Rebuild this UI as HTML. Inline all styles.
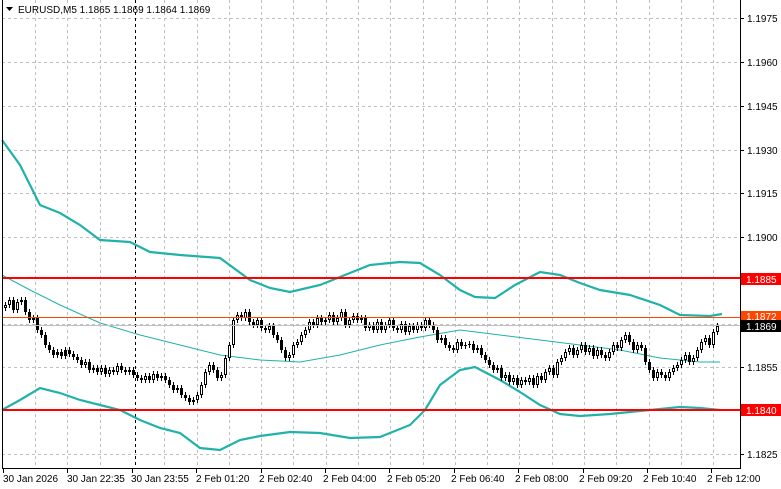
<!DOCTYPE html>
<html><head><meta charset="utf-8"><style>
html,body{margin:0;padding:0;background:#fff;width:781px;height:489px;overflow:hidden}
svg{display:block}
text{font-family:"Liberation Sans",sans-serif;font-size:10px;fill:#000}
</style></head><body>
<svg width="781" height="489" xmlns="http://www.w3.org/2000/svg">
<g stroke="#c0c0c0" stroke-dasharray="3,3" shape-rendering="crispEdges">
<path d="M35.5 0V468M67.5 0V468M100.5 0V468M164.5 0V468M197.5 0V468M229.5 0V468M261.5 0V468M293.5 0V468M326.5 0V468M358.5 0V468M390.5 0V468M423.5 0V468M455.5 0V468M487.5 0V468M519.5 0V468M552.5 0V468M584.5 0V468M616.5 0V468M649.5 0V468M681.5 0V468M713.5 0V468"/>
<path d="M2 18.5H740M2 62.5H740M2 106.5H740M2 150.5H740M2 193.5H740M2 237.5H740M2 324.5H740M2 367.5H740M2 454.5H740"/>
</g>
<path d="M135.5 0V468" stroke="#000" stroke-dasharray="3,3" shape-rendering="crispEdges"/>
<g fill="none" stroke="#20b2aa">
<polyline stroke-width="2.2" points="2,140 20,165 40,205 60,213 80,225 100,240 130,242 150,252 180,255 220,258 250,280 270,288 290,292 320,285 345,275 370,265 400,262 420,263 440,275 460,290 475,297 495,298 515,285 540,272 560,275 580,283 600,290 630,295 660,305 680,315 710,316 722,314"/>
<polyline stroke-width="2.2" points="2,410 20,400 40,388 60,393 80,400 100,405 120,410 140,420 160,428 180,433 200,448 220,450 240,440 260,436 290,432 320,433 350,438 380,437 410,425 425,410 440,385 460,370 475,367 500,380 520,392 540,405 560,414 580,416 610,414 640,411 680,407 700,408 720,410"/>
<polyline stroke-width="1" points="2,275 30,290 60,305 100,323 140,335 180,345 220,355 260,360 300,362 340,355 380,345 420,337 460,330 500,335 540,340 580,345 620,350 660,358 700,362 720,362"/>
</g>
<g shape-rendering="crispEdges">
<path stroke="#000" fill="none" d="M5.5 302V311M9.5 297V308M13.5 297V313M17.5 299V313M21.5 297V305M25.5 297V315M29.5 309V323M33.5 315V323M37.5 315V333M41.5 327V338M45.5 332V348M49.5 342V353M53.5 347V358M57.5 349V358M61.5 349V359M65.5 347V359M69.5 347V357M73.5 351V360M77.5 354V363M81.5 357V368M85.5 359V368M89.5 359V373M93.5 365V373M97.5 365V375M101.5 365V375M105.5 365V377M109.5 367V377M113.5 367V375M117.5 363V375M121.5 363V373M125.5 367V375M129.5 367V375M133.5 367V378M137.5 372V381M141.5 375V383M145.5 373V383M149.5 373V383M153.5 371V383M157.5 371V381M161.5 373V381M165.5 373V383M169.5 377V388M173.5 382V393M177.5 385V393M181.5 385V398M185.5 392V401M189.5 395V405M193.5 397V405M197.5 392V403M201.5 382V398M205.5 369V388M209.5 362V375M213.5 362V373M217.5 367V381M221.5 372V381M225.5 355V378M229.5 342V361M233.5 317V348M237.5 312V323M241.5 312V321M245.5 309V321M249.5 309V325M253.5 319V328M257.5 317V328M261.5 317V331M265.5 325V333M269.5 323V333M273.5 323V338M277.5 332V343M281.5 337V353M285.5 347V361M289.5 352V361M293.5 342V358M297.5 339V348M301.5 332V345M305.5 327V338M309.5 319V333M313.5 319V328M317.5 315V328M321.5 315V325M325.5 317V325M329.5 312V323M333.5 312V325M337.5 315V325M341.5 309V321M345.5 309V328M349.5 317V328M353.5 313V323M357.5 313V323M361.5 315V323M365.5 315V331M369.5 322V331M373.5 322V333M377.5 319V333M381.5 319V333M385.5 322V333M389.5 317V328M393.5 317V331M397.5 325V333M401.5 321V333M405.5 321V335M409.5 323V335M413.5 323V333M417.5 322V333M421.5 322V331M425.5 317V331M429.5 317V328M433.5 322V333M437.5 327V343M441.5 335V343M445.5 335V348M449.5 342V351M453.5 345V353M457.5 339V353M461.5 339V349M465.5 342V349M469.5 341V348M473.5 341V353M477.5 345V353M481.5 345V358M485.5 352V363M489.5 357V368M493.5 362V373M497.5 365V373M501.5 365V381M505.5 372V381M509.5 372V385M513.5 375V385M517.5 375V388M521.5 377V388M525.5 377V385M529.5 375V385M533.5 375V388M537.5 373V388M541.5 373V383M545.5 369V383M549.5 365V375M553.5 365V378M557.5 359V378M561.5 355V365M565.5 349V361M569.5 345V355M573.5 345V358M577.5 347V358M581.5 342V353M585.5 342V355M589.5 345V355M593.5 345V359M597.5 347V359M601.5 347V358M605.5 352V361M609.5 349V361M613.5 342V355M617.5 342V351M621.5 337V351M625.5 332V343M629.5 332V345M633.5 339V353M637.5 342V353M641.5 342V351M645.5 345V365M649.5 359V373M653.5 367V381M657.5 369V381M661.5 369V378M665.5 372V381M669.5 369V381M673.5 365V375M677.5 362V371M681.5 357V368M685.5 352V363M689.5 352V365M693.5 355V365M697.5 347V361M701.5 339V353M705.5 335V345M709.5 335V348M713.5 329V348M717.5 323V335"/>
<path fill="#000" d="M4 305h3V308h-3zM8 300h3V305h-3zM12 300h3V310h-3zM16 302h3V310h-3zM20 300h3V302h-3zM24 300h3V312h-3zM28 312h3V320h-3zM32 318h3V320h-3zM36 318h3V330h-3zM40 330h3V335h-3zM44 335h3V345h-3zM48 345h3V350h-3zM52 350h3V355h-3zM56 352h3V355h-3zM60 352h3V356h-3zM64 350h3V356h-3zM68 350h3V354h-3zM72 354h3V357h-3zM76 357h3V360h-3zM80 360h3V365h-3zM84 362h3V365h-3zM88 362h3V370h-3zM92 368h3V370h-3zM96 368h3V372h-3zM100 368h3V372h-3zM104 368h3V374h-3zM108 370h3V374h-3zM112 370h3V372h-3zM116 366h3V372h-3zM120 366h3V370h-3zM124 370h3V372h-3zM128 370h3V372h-3zM132 370h3V375h-3zM136 375h3V378h-3zM140 378h3V380h-3zM144 376h3V380h-3zM148 376h3V380h-3zM152 374h3V380h-3zM156 374h3V378h-3zM160 376h3V378h-3zM164 376h3V380h-3zM168 380h3V385h-3zM172 385h3V390h-3zM176 388h3V390h-3zM180 388h3V395h-3zM184 395h3V398h-3zM188 398h3V402h-3zM192 400h3V402h-3zM196 395h3V400h-3zM200 385h3V395h-3zM204 372h3V385h-3zM208 365h3V372h-3zM212 365h3V370h-3zM216 370h3V378h-3zM220 375h3V378h-3zM224 358h3V375h-3zM228 345h3V358h-3zM232 320h3V345h-3zM236 315h3V320h-3zM240 315h3V318h-3zM244 312h3V318h-3zM248 312h3V322h-3zM252 322h3V325h-3zM256 320h3V325h-3zM260 320h3V328h-3zM264 328h3V330h-3zM268 326h3V330h-3zM272 326h3V335h-3zM276 335h3V340h-3zM280 340h3V350h-3zM284 350h3V358h-3zM288 355h3V358h-3zM292 345h3V355h-3zM296 342h3V345h-3zM300 335h3V342h-3zM304 330h3V335h-3zM308 322h3V330h-3zM312 322h3V325h-3zM316 318h3V325h-3zM320 318h3V322h-3zM324 320h3V322h-3zM328 315h3V320h-3zM332 315h3V322h-3zM336 318h3V322h-3zM340 312h3V318h-3zM344 312h3V325h-3zM348 320h3V325h-3zM352 316h3V320h-3zM356 316h3V320h-3zM360 318h3V320h-3zM364 318h3V328h-3zM368 325h3V328h-3zM372 325h3V330h-3zM376 322h3V330h-3zM380 322h3V330h-3zM384 325h3V330h-3zM388 320h3V325h-3zM392 320h3V328h-3zM396 328h3V330h-3zM400 324h3V330h-3zM404 324h3V332h-3zM408 326h3V332h-3zM412 326h3V330h-3zM416 325h3V330h-3zM420 325h3V328h-3zM424 320h3V328h-3zM428 320h3V325h-3zM432 325h3V330h-3zM436 330h3V340h-3zM440 338h3V340h-3zM444 338h3V345h-3zM448 345h3V348h-3zM452 348h3V350h-3zM456 342h3V350h-3zM460 342h3V346h-3zM464 345h3V346h-3zM468 344h3V345h-3zM472 344h3V350h-3zM476 348h3V350h-3zM480 348h3V355h-3zM484 355h3V360h-3zM488 360h3V365h-3zM492 365h3V370h-3zM496 368h3V370h-3zM500 368h3V378h-3zM504 375h3V378h-3zM508 375h3V382h-3zM512 378h3V382h-3zM516 378h3V385h-3zM520 380h3V385h-3zM524 380h3V382h-3zM528 378h3V382h-3zM532 378h3V385h-3zM536 376h3V385h-3zM540 376h3V380h-3zM544 372h3V380h-3zM548 368h3V372h-3zM552 368h3V375h-3zM556 362h3V375h-3zM560 358h3V362h-3zM564 352h3V358h-3zM568 348h3V352h-3zM572 348h3V355h-3zM576 350h3V355h-3zM580 345h3V350h-3zM584 345h3V352h-3zM588 348h3V352h-3zM592 348h3V356h-3zM596 350h3V356h-3zM600 350h3V355h-3zM604 355h3V358h-3zM608 352h3V358h-3zM612 345h3V352h-3zM616 345h3V348h-3zM620 340h3V348h-3zM624 335h3V340h-3zM628 335h3V342h-3zM632 342h3V350h-3zM636 345h3V350h-3zM640 345h3V348h-3zM644 348h3V362h-3zM648 362h3V370h-3zM652 370h3V378h-3zM656 372h3V378h-3zM660 372h3V375h-3zM664 375h3V378h-3zM668 372h3V378h-3zM672 368h3V372h-3zM676 365h3V368h-3zM680 360h3V365h-3zM684 355h3V360h-3zM688 355h3V362h-3zM692 358h3V362h-3zM696 350h3V358h-3zM700 342h3V350h-3zM704 338h3V342h-3zM708 338h3V345h-3zM712 332h3V345h-3zM716 326h3V332h-3z"/>
<path fill="#fff" d="M5 306h1V307h-1zM9 301h1V304h-1zM17 303h1V309h-1zM85 363h1V364h-1zM101 369h1V371h-1zM109 371h1V373h-1zM117 367h1V371h-1zM145 377h1V379h-1zM153 375h1V379h-1zM197 396h1V399h-1zM201 386h1V394h-1zM205 373h1V384h-1zM209 366h1V371h-1zM221 376h1V377h-1zM225 359h1V374h-1zM229 346h1V357h-1zM233 321h1V344h-1zM237 316h1V319h-1zM245 313h1V317h-1zM257 321h1V324h-1zM269 327h1V329h-1zM289 356h1V357h-1zM293 346h1V354h-1zM297 343h1V344h-1zM301 336h1V341h-1zM305 331h1V334h-1zM309 323h1V329h-1zM317 319h1V324h-1zM329 316h1V319h-1zM337 319h1V321h-1zM341 313h1V317h-1zM349 321h1V324h-1zM353 317h1V319h-1zM369 326h1V327h-1zM377 323h1V329h-1zM385 326h1V329h-1zM389 321h1V324h-1zM401 325h1V329h-1zM409 327h1V331h-1zM417 326h1V329h-1zM425 321h1V327h-1zM441 339h1V339h-1zM457 343h1V349h-1zM505 376h1V377h-1zM513 379h1V381h-1zM521 381h1V384h-1zM529 379h1V381h-1zM537 377h1V384h-1zM545 373h1V379h-1zM549 369h1V371h-1zM557 363h1V374h-1zM561 359h1V361h-1zM565 353h1V357h-1zM569 349h1V351h-1zM577 351h1V354h-1zM581 346h1V349h-1zM589 349h1V351h-1zM597 351h1V355h-1zM609 353h1V357h-1zM613 346h1V351h-1zM621 341h1V347h-1zM625 336h1V339h-1zM637 346h1V349h-1zM657 373h1V377h-1zM669 373h1V377h-1zM673 369h1V371h-1zM677 366h1V367h-1zM681 361h1V364h-1zM685 356h1V359h-1zM693 359h1V361h-1zM697 351h1V357h-1zM701 343h1V349h-1zM705 339h1V341h-1zM713 333h1V344h-1zM717 327h1V331h-1z"/>
<path d="M2 278H740M2 410H740" stroke="#ff0000" stroke-width="2"/>
<path d="M2 317.5H740" stroke="#ff4500"/>
<path d="M2 325.5H740" stroke="#c0c0c0"/>
<path d="M2.5 0V469M2 468.5H741M740.5 0V469" stroke="#000"/>
<path d="M740 18.5h4M740 62.5h4M740 106.5h4M740 150.5h4M740 193.5h4M740 237.5h4M740 367.5h4M740 454.5h4M3.5 468v5M67.5 468v5M132.5 468v5M196.5 468v5M261.5 468v5M325.5 468v5M389.5 468v5M454.5 468v5M518.5 468v5M583.5 468v5M647.5 468v5M711.5 468v5" stroke="#000"/>
<rect x="741" y="273" width="40" height="12" fill="#ff0000"/>
<rect x="741" y="404" width="40" height="12" fill="#ff0000"/>
<rect x="741" y="311" width="40" height="11" fill="#ff4500"/>
<rect x="741" y="320" width="40" height="12" fill="#000"/>
</g>
<text x="747" y="22">1.1975</text>
<text x="747" y="66">1.1960</text>
<text x="747" y="110">1.1945</text>
<text x="747" y="154">1.1930</text>
<text x="747" y="197">1.1915</text>
<text x="747" y="241">1.1900</text>
<text x="747" y="371">1.1855</text>
<text x="747" y="458">1.1825</text>
<text x="746" y="283" style="fill:#fff">1.1885</text>
<text x="746" y="414" style="fill:#fff">1.1840</text>
<text x="746" y="320" style="fill:#fff">1.1872</text>
<text x="746" y="330" style="fill:#fff">1.1869</text>
<text x="3" y="482">30 Jan 2026</text>
<text x="67" y="482">30 Jan 22:35</text>
<text x="131" y="482">30 Jan 23:55</text>
<text x="196" y="482">2 Feb 01:20</text>
<text x="259" y="482">2 Feb 02:40</text>
<text x="323" y="482">2 Feb 04:00</text>
<text x="387" y="482">2 Feb 05:20</text>
<text x="451" y="482">2 Feb 06:40</text>
<text x="515" y="482">2 Feb 08:00</text>
<text x="579" y="482">2 Feb 09:20</text>
<text x="643" y="482">2 Feb 10:40</text>
<text x="707" y="482">2 Feb 12:00</text>
<path d="M6 7L13 7L9.5 11Z" fill="#000"/>
<text x="18" y="13">EURUSD,M5  1.1865 1.1869 1.1864 1.1869</text>
</svg>
</body></html>
